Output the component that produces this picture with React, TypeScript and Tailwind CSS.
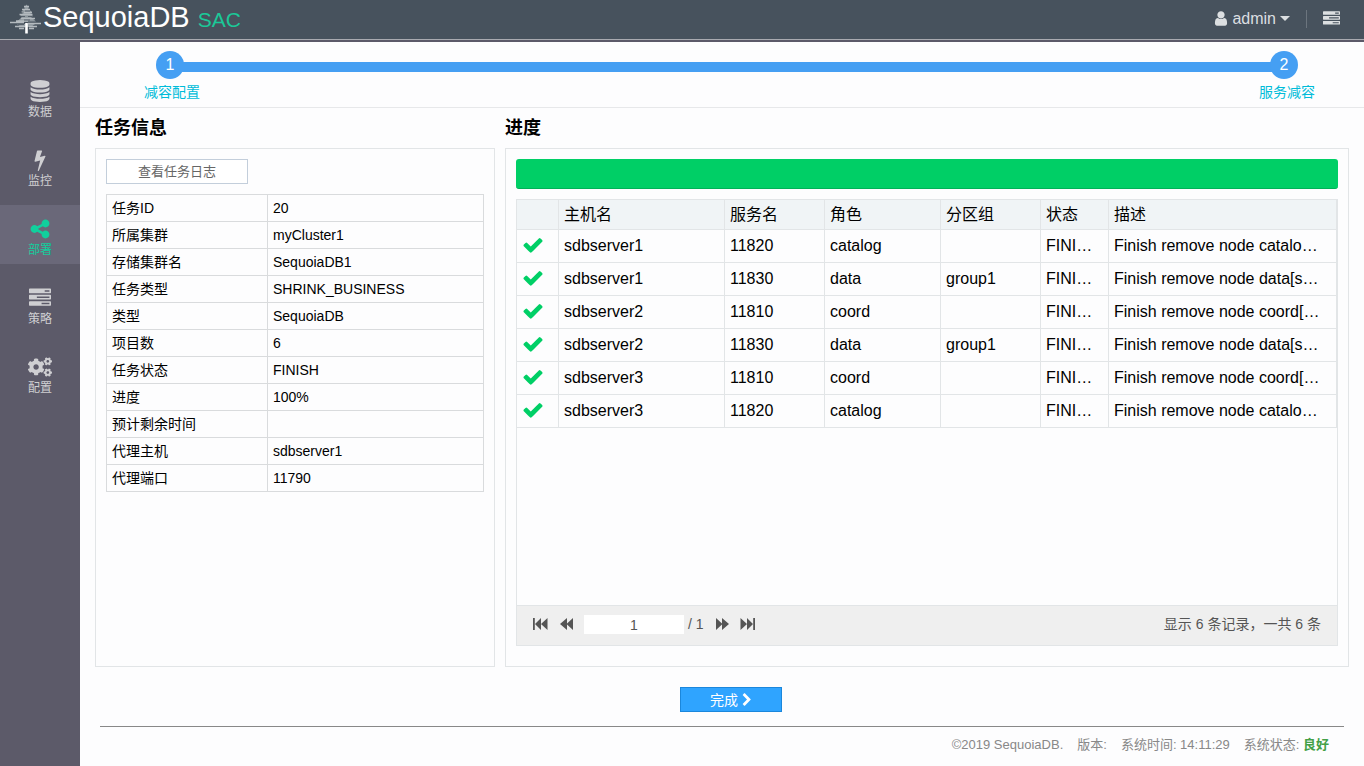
import { FaCogs } from "react-icons/fa";

// Icon outlines, y axis points up
const ICONS = {
    database: {
        width: 1536,
        d: "M768 768q237 0 443 43t325 127v-170q0 -69 -103 -128t-280 -93.5t-385 -34.5t-385 34.5t-280 93.5t-103 128v170q119 -84 325 -127t443 -43zM768 0q237 0 443 43t325 127v-170q0 -69 -103 -128t-280 -93.5t-385 -34.5t-385 34.5t-280 93.5t-103 128v170q119 -84 325 -127t443 -43zM768 384q237 0 443 43t325 127v-170q0 -69 -103 -128t-280 -93.5t-385 -34.5t-385 34.5t-280 93.5t-103 128v170q119 -84 325 -127t443 -43zM768 1536q208 0 385 -34.5t280 -93.5t103 -128v-128q0 -69 -103 -128t-280 -93.5t-385 -34.5t-385 34.5t-280 93.5t-103 128v128q0 69 103 128t280 93.5t385 34.5z",
    },
    bolt: {
        width: 896,
        d: "M885 970q18 -20 7 -44l-540 -1157q-13 -25 -42 -25q-4 0 -14 2q-17 5 -25.5 19t-4.5 30l197 808l-406 -101q-4 -1 -12 -1q-18 0 -31 11q-18 15 -13 39l201 825q4 14 16 23t28 9h328q19 0 32 -12.5t13 -29.5q0 -8 -5 -18l-171 -463l396 98q8 2 12 2q19 0 34 -15z",
    },
    share: {
        width: 1536,
        d: "M1216 512q133 0 226.5 -93.5t93.5 -226.5t-93.5 -226.5t-226.5 -93.5t-226.5 93.5t-93.5 226.5q0 12 2 34l-360 180q-92 -86 -218 -86q-133 0 -226.5 93.5t-93.5 226.5t93.5 226.5t226.5 93.5q126 0 218 -86l360 180q-2 22 -2 34q0 133 93.5 226.5t226.5 93.5t226.5 -93.5t93.5 -226.5t-93.5 -226.5t-226.5 -93.5q-126 0 -218 86l-360 -180q2 -22 2 -34t-2 -34l360 -180q92 86 218 86z",
    },
    tasks: {
        width: 1792,
        d: "M1024 128h640v128h-640v-128zM640 640h1024v128h-1024v-128zM1280 1152h384v128h-384v-128zM1792 320v-256q0 -26 -19 -45t-45 -19h-1664q-26 0 -45 19t-19 45v256q0 26 19 45t45 19h1664q26 0 45 -19t19 -45zM1792 832v-256q0 -26 -19 -45t-45 -19h-1664q-26 0 -45 19t-19 45v256q0 26 19 45t45 19h1664q26 0 45 -19t19 -45zM1792 1344v-256q0 -26 -19 -45t-45 -19h-1664q-26 0 -45 19t-19 45v256q0 26 19 45t45 19h1664q26 0 45 -19t19 -45z",
    },
    user: {
        width: 1280,
        d: "M1280 137q0 -109 -62.5 -187t-150.5 -78h-854q-88 0 -150.5 78t-62.5 187q0 85 8.5 160.5t31.5 152t58.5 131t94 89t134.5 34.5q131 -128 313 -128t313 128q76 0 134.5 -34.5t94 -89t58.5 -131t31.5 -152t8.5 -160.5zM1024 1024q0 -159 -112.5 -271.5t-271.5 -112.5t-271.5 112.5t-112.5 271.5t112.5 271.5t271.5 112.5t271.5 -112.5t112.5 -271.5z",
    },
    check: {
        width: 1792,
        d: "M1671 970q0 -40 -28 -68l-724 -724l-136 -136q-28 -28 -68 -28t-68 28l-136 136l-362 362q-28 28 -28 68t28 68l136 136q28 28 68 28t68 -28l294 -295l656 657q28 28 68 28t68 -28l136 -136q28 -28 28 -68z",
    },
    chevronRight: {
        width: 1280,
        d: "M1107 659l-742 -742q-19 -19 -45 -19t-45 19l-166 166q-19 19 -19 45t19 45l531 531l-531 531q-19 19 -19 45t19 45l166 166q19 19 45 19t45 -19l742 -742q19 -19 19 -45t-19 -45z",
    },
};

type IconName = keyof typeof ICONS;

function Icon({ name, className }: { name: IconName; className: string }) {
    const { width, d } = ICONS[name];
    return (
        <svg className={className} viewBox={`0 -1536 ${width} 1792`} fill="currentColor" aria-hidden="true">
            <path transform="scale(1 -1)" d={d} />
        </svg>
    );
}

const navItems: { label: string; icon: IconName | "cogs"; active?: boolean }[] = [
    { label: "数据", icon: "database" },
    { label: "监控", icon: "bolt" },
    { label: "部署", icon: "share", active: true },
    { label: "策略", icon: "tasks" },
    { label: "配置", icon: "cogs" },
];

const taskInfo = [
    ["任务ID", "20"],
    ["所属集群", "myCluster1"],
    ["存储集群名", "SequoiaDB1"],
    ["任务类型", "SHRINK_BUSINESS"],
    ["类型", "SequoiaDB"],
    ["项目数", "6"],
    ["任务状态", "FINISH"],
    ["进度", "100%"],
    ["预计剩余时间", ""],
    ["代理主机", "sdbserver1"],
    ["代理端口", "11790"],
];

const columns = ["主机名", "服务名", "角色", "分区组", "状态", "描述"];

const nodes = [
    { host: "sdbserver1", port: "11820", role: "catalog", group: "" },
    { host: "sdbserver1", port: "11830", role: "data", group: "group1" },
    { host: "sdbserver2", port: "11810", role: "coord", group: "" },
    { host: "sdbserver2", port: "11830", role: "data", group: "group1" },
    { host: "sdbserver3", port: "11810", role: "coord", group: "" },
    { host: "sdbserver3", port: "11820", role: "catalog", group: "" },
];

function TreeLogo() {
    return (
        <svg className="h-[30px] w-8" viewBox="0 0 32 30" fill="none" stroke="#b4babf" aria-hidden="true">
            {/* Crown */}
            <path
                stroke="none"
                fill="#8f989f"
                d="M16.500 0.500L19 4l-1 .5L22 8l-2 1 3 3-2 1 5 4.500H7L12 13l-2-1 3-3-2-1 4-3.500-1-.5zM7 20h18l-4 3H11z"
            />
            {/* Branches */}
            <path
                strokeWidth="1.4"
                d="M14 2.500h5M12 5.500h8M14 8.500h8M9.500 10.500h13M11 14.500h14M6 17h12M0 18.500h14M18 19.500h13M5 22.500h10M19 22.500h8M9 24.500h5M19 24.500h5"
            />
            <path stroke="#47525d" strokeWidth="0.8" d="M15 7h5M10 12.500h5M18 12.500h4M14 16h6M8 20.500h6" />
            {/* Trunk */}
            <path stroke="#fff" strokeWidth="2.6" d="M16.500 19v10.500" />
        </svg>
    );
}

function Header() {
    return (
        <header className="flex h-10 items-center justify-between border-b border-[#a9aab0] bg-[#47525d] pr-6 pb-[2px] pl-[10px] text-[#dcdfe1]">
            <a href="#" className="flex items-baseline">
                <span className="self-center">
                    <TreeLogo />
                </span>
                <span className="ml-px text-[29px] leading-8 text-white">SequoiaDB</span>
                <span className="ml-2 text-[21px] leading-8 text-[#1bc998]">SAC</span>
            </a>
            <div className="flex items-center">
                <button type="button" className="flex items-center text-base">
                    <Icon name="user" className="mr-1 h-[17px] w-[14px]" />
                    admin
                    <svg className="ml-1 h-[5px] w-[10px]" viewBox="0 0 10 5" fill="currentColor" aria-hidden="true">
                        <path d="M0 0h10L5 5z" />
                    </svg>
                </button>
                <span className="mx-4 h-[18px] w-px bg-[#6c757e]"></span>
                <button type="button" aria-label="任务">
                    <Icon name="tasks" className="h-[17px] w-[17px]" />
                </button>
            </div>
        </header>
    );
}

function Sidebar() {
    return (
        <nav className="flex w-20 shrink-0 flex-col gap-[10px] bg-[#5c5a69] pt-[25px]">
            {navItems.map((item) => (
                <a
                    key={item.label}
                    href="#"
                    className={
                        item.active
                            ? "flex h-[59px] flex-col items-center bg-[#6a6879] pt-[13px] text-xs text-[#11cf9d]"
                            : "flex h-[59px] flex-col items-center pt-[13px] text-xs text-[#cfcfd2]"
                    }
                >
                    {item.icon === "cogs" ? (
                        <FaCogs className="h-[22px] w-6" />
                    ) : (
                        <Icon name={item.icon} className="h-[22px] w-[22px]" />
                    )}
                    <span className="leading-5">{item.label}</span>
                </a>
            ))}
        </nav>
    );
}

function Steps() {
    return (
        <div className="h-[66px] border-b border-[#e7e8ea] pt-[9px]">
            <div className="flex items-center pr-[66px] pl-[76px] text-base text-white">
                <span className="flex size-7 items-center justify-center rounded-full bg-[#459ff3]">1</span>
                <span className="-mx-1 mt-1 h-[10px] flex-1 bg-[#459ff3]"></span>
                <span className="flex size-7 items-center justify-center rounded-full bg-[#459ff3]">2</span>
            </div>
            <div className="flex justify-between pt-[3px] pr-[49px] pl-16 text-sm text-[#00bcd9]">
                <span>减容配置</span>
                <span>服务减容</span>
            </div>
        </div>
    );
}

function TaskPanel() {
    return (
        <section className="flex w-[400px] shrink-0 flex-col">
            <h2 className="h-10 pt-[6px] text-lg font-bold">任务信息</h2>
            <div className="flex-1 border border-[#e2e5e7] p-[10px]">
                <button
                    type="button"
                    className="h-[25px] w-[142px] border border-[#c3cedb] bg-white text-[13px] text-[#666]"
                >
                    查看任务日志
                </button>
                <table className="mt-[10px] w-full table-fixed border-collapse text-sm">
                    <tbody>
                        {taskInfo.map(([label, value]) => (
                            <tr key={label} className="h-[27px]">
                                <th scope="row" className="w-[161px] border border-[#d9dbdd] px-[5px] text-left font-normal">
                                    {label}
                                </th>
                                <td className="border border-[#d9dbdd] px-[5px]">{value}</td>
                            </tr>
                        ))}
                    </tbody>
                </table>
            </div>
        </section>
    );
}

function Pager() {
    return (
        <div className="flex h-10 items-center justify-between border-t border-[#e2e5e7] bg-[#efefef] pr-4 pb-[3px] pl-[15px] text-sm text-[#555]">
            <div className="flex items-center">
                <button type="button" aria-label="首页">
                    <svg className="h-3 w-[16px]" viewBox="0 0 16 12" fill="currentColor" aria-hidden="true">
                        <path d="M1 0h1.800v12H1zM9 0v12L3 6zM15.500 0v12L9 6z" />
                    </svg>
                </button>
                <button type="button" aria-label="上一页" className="ml-3">
                    <svg className="h-3 w-[14px]" viewBox="0 0 14 12" fill="currentColor" aria-hidden="true">
                        <path d="M7 0v12L0 6zM13 0v12L6.500 6z" />
                    </svg>
                </button>
                <input
                    type="text"
                    aria-label="页码"
                    defaultValue="1"
                    className="mt-px ml-[10px] h-[19px] w-[100px] bg-white text-center text-sm"
                />
                <span className="ml-1">/ 1</span>
                <button type="button" aria-label="下一页" className="ml-3">
                    <svg className="h-3 w-[14px]" viewBox="0 0 14 12" fill="currentColor" aria-hidden="true">
                        <path d="M0 0v12l6.500-6zM6 0v12l7-6z" />
                    </svg>
                </button>
                <button type="button" aria-label="末页" className="ml-[10px]">
                    <svg className="h-3 w-[16px]" viewBox="0 0 16 12" fill="currentColor" aria-hidden="true">
                        <path d="M.5 0v12L7 6zM7 0v12l6-6zM13.200 0H15v12h-1.800z" />
                    </svg>
                </button>
            </div>
            <span>显示 6 条记录，一共 6 条</span>
        </div>
    );
}

function ProgressPanel() {
    const cell = "truncate border-r border-b border-[#e2e5e7] pr-[14px] pl-[5px]";

    return (
        <section className="flex min-w-0 flex-1 flex-col">
            <h2 className="h-10 pt-[6px] text-lg font-bold">进度</h2>
            <div className="flex flex-1 flex-col border border-[#e2e5e7] px-[10px] pt-[10px] pb-5">
                <div
                    role="progressbar"
                    aria-label="进度"
                    aria-valuenow={100}
                    className="h-[30px] rounded-[3px] border-b border-[#00b158] bg-[#00cf66]"
                ></div>
                <div className="mt-[10px] flex flex-1 flex-col justify-between border border-[#e2e5e7]">
                    <table className="w-full table-fixed border-separate border-spacing-0 text-base">
                        <colgroup>
                            <col className="w-[42px]" />
                            <col className="w-[166px]" />
                            <col className="w-[100px]" />
                            <col className="w-[116px]" />
                            <col className="w-[100px]" />
                            <col className="w-[68px]" />
                            <col />
                        </colgroup>
                        <thead>
                            <tr className="h-[30px] bg-[#f0f4f6]">
                                <td className={cell}></td>
                                {columns.map((name) => (
                                    <th key={name} scope="col" className={`${cell} text-left font-normal`}>
                                        {name}
                                    </th>
                                ))}
                            </tr>
                        </thead>
                        <tbody>
                            {nodes.map((node) => (
                                <tr key={node.host + node.port} className="h-[33px]">
                                    <td className="border-r border-b border-[#e2e5e7] pb-[2px] pl-[5px]">
                                        <Icon name="check" className="h-[22px] w-[22px] text-[#00cf66]" />
                                    </td>
                                    <td className={cell}>{node.host}</td>
                                    <td className={cell}>{node.port}</td>
                                    <td className={cell}>{node.role}</td>
                                    <td className={cell}>{node.group}</td>
                                    <td className={cell}>FINISH</td>
                                    <td className={cell}>
                                        Finish remove node {node.role}[{node.host}:{node.port}]
                                    </td>
                                </tr>
                            ))}
                        </tbody>
                    </table>
                    <Pager />
                </div>
            </div>
        </section>
    );
}

function Footer() {
    return (
        <footer className="mx-5 flex h-10 justify-end gap-[14px] border-t border-[#888] pt-2 pr-[15px] text-[13px] text-[#888]">
            <span>©2019 SequoiaDB.</span>
            <span>版本:</span>
            <span>系统时间: 14:11:29</span>
            <span>
                系统状态: <b className="text-[#43a047]">良好</b>
            </span>
        </footer>
    );
}

export default function App() {
    return (
        <div className="flex min-h-screen flex-col bg-[#fdfdfe] font-['Liberation_Sans','Noto_Sans_CJK_SC',sans-serif] text-black">
            <Header />
            <div className="flex flex-1 border-t-2 border-[#5c5a69]">
                <Sidebar />
                <main className="flex min-w-0 flex-1 flex-col">
                    <Steps />
                    <div className="flex flex-1 gap-[10px] px-[15px]">
                        <TaskPanel />
                        <ProgressPanel />
                    </div>
                    <div className="flex justify-center pt-5 pb-[14px] pl-[18px]">
                        <button
                            type="button"
                            className="flex h-[25px] w-[102px] items-center justify-center border border-[#1b87dc] bg-[#2fa4ff] text-sm text-white"
                        >
                            完成
                            <Icon name="chevronRight" className="ml-1 h-[14px] w-[10px]" />
                        </button>
                    </div>
                    <Footer />
                </main>
            </div>
        </div>
    );
}
